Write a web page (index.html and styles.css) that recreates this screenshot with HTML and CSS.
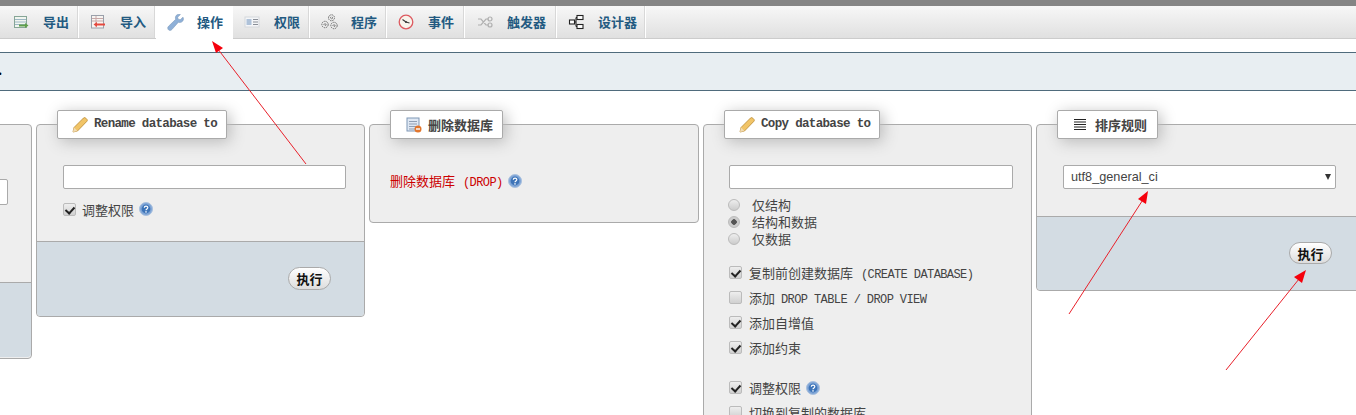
FILE: index.html
```html
<!DOCTYPE html>
<html lang="zh">
<head>
<meta charset="utf-8">
<title>phpMyAdmin</title>
<link rel="stylesheet" href="styles.css">
</head>
<body>
<div class="page">
  <div class="topbar"></div>
  <nav class="tabs">
    <a class="tab"><svg class="ico" viewBox="0 0 16 16"><rect x="1.500" y="2.500" width="12" height="11" fill="#f1f5ef" stroke="#86a596"/><path d="M2 5.500h11M2 8h11M2 10.500h11" stroke="#9db7c4" fill="none"/><path d="M6 10.500h6V9l3.500 2.500L12 14v-1.500H6z" fill="#5f9f4a"/></svg><span>导出</span></a>
    <a class="tab"><svg class="ico" viewBox="0 0 16 16"><rect x="1.500" y="1.500" width="12" height="12.500" fill="#f7f4f1" stroke="#9aa0aa"/><path d="M2 4.500h11M2 7h11M6 2v11.500" stroke="#c7a7a7" fill="none"/><path d="M15 9.500H7V8l-3.500 2.500L7 13v-1.500h8z" fill="#e5483e"/></svg><span>导入</span></a>
    <a class="tab active"><svg class="ico ico-w" viewBox="0 0 17 17"><path d="M16 3.200l-2.800 2.600-2-.6-.6-2L13.400.5c-2-.8-4.400.2-4.900 2.400-.2.900-.1 1.700.2 2.400L1.500 12.300c-1.300 1.300-.8 3 .2 3.700 1 .7 2.300.5 3.200-.5l6.500-7.300c1 .4 2.100.4 3.100-.1 1.700-.9 2.500-3 1.500-4.900z" fill="#8eb0d8" stroke="#7f9cbc" stroke-width=".6"/></svg><span>操作</span></a>
    <a class="tab"><svg class="ico" viewBox="0 0 16 16"><rect x="1" y="3" width="14" height="10" fill="#f5f6f8" stroke="#d4d7dc"/><rect x="2.500" y="5" width="5" height="6" fill="#afc2d9"/><path d="M9 5.500h5M9 8h5M9 10.500h5" stroke="#8a8f98"/></svg><span>权限</span></a>
    <a class="tab"><svg class="ico ico-w" viewBox="0 0 17 17" fill="none" stroke="#6b6b6b" stroke-width="1" stroke-dasharray="1.500 .8"><circle cx="10.500" cy="3.800" r="3"/><circle cx="4" cy="10.500" r="3.200"/><circle cx="13" cy="11.500" r="3.200"/><circle cx="10.500" cy="3.800" r="1"/><circle cx="4" cy="10.500" r="1"/><circle cx="13" cy="11.500" r="1"/></svg><span>程序</span></a>
    <a class="tab tab-e"><svg class="ico" viewBox="0 0 16 16"><circle cx="8" cy="8" r="6.800" fill="#f8f4ec" stroke="#dd5a60" stroke-width="1.300"/><path d="M8 8L4.500 5.500M8 8l3.500 1" stroke="#3a3a3a" stroke-width="1.100"/><circle cx="8" cy="8" r="1" fill="#3a3a3a"/></svg><span>事件</span></a>
    <a class="tab tab-w"><svg class="ico" viewBox="0 0 16 16" fill="none" stroke="#b0b0b0" stroke-width="1.200"><path d="M1 5h3l5 6h3M1 11h3l5-6h3"/><circle cx="13" cy="5" r="2"/><circle cx="13" cy="11" r="2"/></svg><span>触发器</span></a>
    <a class="tab tab-d"><svg class="ico" viewBox="0 0 16 16" fill="#fff" stroke="#222" stroke-width="1.100"><rect x="9" y="1.500" width="6" height="4"/><rect x="9" y="10.500" width="6" height="4"/><rect x="1.500" y="6" width="5" height="4"/><path d="M6.500 8H8M8 3.500V12.500M8 3.500h1M8 12.500h1" fill="none"/></svg><span>设计器</span></a>
  </nav>
  <div class="notice"><span class="notice-dot">.</span></div>
  <main class="panels">
    <section class="panel p-first">
      <div class="legend"><span>重命名</span></div>
      <div class="body body-first"><input class="text" type="text"></div>
      <div class="foot foot-first"></div>
    </section>
    <section class="panel">
      <div class="legend">
        <svg class="lg-ico" viewBox="0 0 16 16"><path d="M1 15l1-4.500L11.500 1c.8-.6 1.600-.5 2.300.2l1 1c.7.700.7 1.500 0 2.200L5.500 14z" fill="#f1c467" stroke="#b98a35" stroke-width=".8"/><path d="M1 15l1-4.500 3.500 3.500z" fill="#f2dcb4"/></svg>
        <span class="mono-b">Rename database to</span>
      </div>
      <div class="body body-rename">
        <input class="text" type="text">
        <label class="check check-rename"><input class="cb" type="checkbox" checked><span>调整权限</span><svg class="help" viewBox="0 0 14 14"><circle cx="7" cy="7" r="6.500" fill="#7fa5d6" stroke="#a9c0de"/><circle cx="7" cy="7" r="4.400" fill="#3d74b8"/><path d="M5.300 5.700c0-2.200 3.500-2.200 3.500-.1 0 1.300-1.800 1.300-1.800 2.600" fill="none" stroke="#fff" stroke-width="1.200"/><rect x="6.300" y="9.200" width="1.400" height="1.400" fill="#fff"/></svg></label>
      </div>
      <div class="foot foot-rename"><button class="go" type="button">执行</button></div>
    </section>
    <section class="panel p-drop">
      <div class="legend">
        <svg class="lg-ico" viewBox="0 0 16 16"><rect x="1" y="1" width="12" height="13" fill="#dfe8f4" stroke="#7f97b6"/><path d="M3 4.500h8M3 7h8M3 9.500h8M3 12h6" stroke="#8f9fb5"/><circle cx="12" cy="12" r="3.500" fill="#e2762d"/><rect x="10" y="11.300" width="4" height="1.400" fill="#fff"/></svg>
        <span class="cjk-b">删除数据库</span>
      </div>
      <div class="body body-drop"><span class="drop">删除数据库<span class="mono">(DROP)</span></span><svg class="help" viewBox="0 0 14 14"><circle cx="7" cy="7" r="6.500" fill="#7fa5d6" stroke="#a9c0de"/><circle cx="7" cy="7" r="4.400" fill="#3d74b8"/><path d="M5.300 5.700c0-2.200 3.500-2.200 3.500-.1 0 1.300-1.800 1.300-1.800 2.600" fill="none" stroke="#fff" stroke-width="1.200"/><rect x="6.300" y="9.200" width="1.400" height="1.400" fill="#fff"/></svg></div>
    </section>
    <section class="panel">
      <div class="legend">
        <svg class="lg-ico" viewBox="0 0 16 16"><path d="M1 15l1-4.500L11.500 1c.8-.6 1.600-.5 2.300.2l1 1c.7.700.7 1.500 0 2.200L5.500 14z" fill="#f1c467" stroke="#b98a35" stroke-width=".8"/><path d="M1 15l1-4.500 3.500 3.500z" fill="#f2dcb4"/></svg>
        <span class="mono-b">Copy database to</span>
      </div>
      <div class="body body-copy">
        <input class="text" type="text">
        <div class="radios">
          <label class="radio"><input class="rb" type="radio" name="what"><span>仅结构</span></label>
          <label class="radio"><input class="rb" type="radio" name="what" checked><span>结构和数据</span></label>
          <label class="radio"><input class="rb" type="radio" name="what"><span>仅数据</span></label>
        </div>
        <div class="checks">
          <label class="check"><input class="cb" type="checkbox" checked><span>复制前创建数据库<span class="mono">(CREATE DATABASE)</span></span></label>
          <label class="check"><input class="cb" type="checkbox"><span>添加<span class="mono mono-near">DROP TABLE / DROP VIEW</span></span></label>
          <label class="check"><input class="cb" type="checkbox" checked><span>添加自增值</span></label>
          <label class="check"><input class="cb" type="checkbox" checked><span>添加约束</span></label>
          <label class="check check-sep"><input class="cb" type="checkbox" checked><span>调整权限</span><svg class="help" viewBox="0 0 14 14"><circle cx="7" cy="7" r="6.500" fill="#7fa5d6" stroke="#a9c0de"/><circle cx="7" cy="7" r="4.400" fill="#3d74b8"/><path d="M5.300 5.700c0-2.200 3.500-2.200 3.500-.1 0 1.300-1.800 1.300-1.800 2.600" fill="none" stroke="#fff" stroke-width="1.200"/><rect x="6.300" y="9.200" width="1.400" height="1.400" fill="#fff"/></svg></label>
          <label class="check"><input class="cb" type="checkbox"><span>切换到复制的数据库</span></label>
        </div>
      </div>
    </section>
    <section class="panel">
      <div class="legend">
        <svg class="lg-ico lg-lines" viewBox="0 0 14 14"><path d="M1 1.500h12M1 4h12M1 6.500h12M1 9h12M1 11.500h12" stroke="#222" stroke-width="1"/></svg>
        <span class="cjk-b">排序规则</span>
      </div>
      <div class="body body-coll">
        <div class="select-wrap">
          <select class="select"><option>utf8_general_ci</option></select>
          <i class="caret"></i>
        </div>
      </div>
      <div class="foot foot-coll"><button class="go go-coll" type="button">执行</button></div>
    </section>
  </main>
  <svg class="arrows" viewBox="0 0 1356 415">
    <g stroke="#e8202a" stroke-width="1" fill="none">
      <path d="M306 164L214 44"/>
      <path d="M1069 314L1146 195"/>
      <path d="M1226 370L1303 274"/>
    </g>
    <g fill="#f5000c">
      <path d="M212 41l11 7-7 5z"/>
      <path d="M1148 191l-2 13-8-5z"/>
      <path d="M1306 270l-4 13-8-6z"/>
    </g>
  </svg>
</div>
</body>
</html>
```
FILE: styles.css
```css
* { box-sizing: border-box; }
html, body { margin: 0; padding: 0; background: #fff; }
body { width: 1356px; height: 415px; overflow: hidden; font-family: "Noto Sans CJK SC", "Liberation Sans", sans-serif; color: #444; }
.page { position: relative; width: 1356px; height: 415px; overflow: hidden; }
.topbar { height: 6px; background: #858585; }
.tabs { display: flex; height: 33px; padding-left: 2px; background: linear-gradient(#f7f7f7, #e0e0e0); border-bottom: 1px solid #ccc; }
.tab { display: flex; align-items: center; width: 77px; height: 32px; padding-left: 11px; border-right: 1px solid #fff; box-shadow: inset -1px 0 0 #d8d8d8; color: #235a81; font-size: 13px; font-weight: 700; line-height: 1; }
.tab-e { width: 78px; }
.tab-w { width: 92px; padding-left: 12px; }
.tab-d { width: 89px; }
.tab.active { height: 33px; background: #fff; box-shadow: none; }
.tab span { margin: -2px 0 0 14px; white-space: nowrap; }
.ico { width: 16px; height: 16px; flex: none; }
.ico-w { width: 17px; height: 17px; margin-right: -1px; }
.notice { height: 39px; margin-top: 13px; background: #e8eef2; border-top: 1px solid #4f6b7c; border-bottom: 1px solid #4f6b7c; font-size: 13px; line-height: 34px; color: #000; }
.notice-dot { display: block; margin-left: -2px; font-weight: 700; }
.panels { display: flex; align-items: flex-start; gap: 4px; margin: 33px 0 0 -298px; width: 2000px; }
.panel { flex: 0 0 330px; width: 330px; background: #eee; border: 1px solid #aaa; border-radius: 4px; font-size: 13px; }
.panel:nth-child(2), .panel:nth-child(4) { flex-basis: 329px; width: 329px; }
.p-first { height: 235px; }
.legend { display: flex; align-items: center; width: fit-content; height: 29px; margin: -15px 0 0 20px; padding: 0 9px 0 14px; background: #fff; border: 1px solid #aaa; border-radius: 2px; box-shadow: 3px 3px 15px #bbb; position: relative; }
.p-first .legend { visibility: hidden; }
.lg-ico { width: 16px; height: 16px; margin-right: 6px; flex: none; }
.lg-lines { width: 14px; height: 14px; margin-right: 8px; }
.p-drop .legend { padding-left: 15px; }
.panel:last-child .legend { padding: 0 10px 0 15px; }
.mono-b { font: 700 12.500px/1 "Liberation Mono", monospace; letter-spacing: -.67px; color: #444; white-space: nowrap; }
.cjk-b { font-weight: 700; font-size: 13px; line-height: 1; color: #444; white-space: nowrap; }
.mono { margin-left: 8px; font: 400 12px/1 "Liberation Mono", monospace; letter-spacing: -.6px; }
.mono-near { margin-left: 6px; }
.text { display: block; height: 24px; background: #fff; border: 1px solid #aaa; border-radius: 2px; padding: 0; }
.body { padding: 26px 19px 0 26px; }
.body-first { height: 143px; padding: 40px 0 0 270px; }
.body-first .text { width: 35px; height: 26px; }
.body-rename { height: 102px; }
.body-rename .text { width: 283px; }
.body-drop { display: flex; align-items: center; height: 83px; padding: 0 0 0 20px; }
.drop { color: #c00; font-size: 13px; }
.body-drop .help { margin-left: 5px; }
.body-copy { height: 305px; padding-left: 25px; }
.body-copy .text { width: 284px; }
.radios { margin: 7px 0 0 -1px; }
.radio { display: flex; align-items: center; height: 17px; font-size: 13px; }
.rb { appearance: none; width: 12px; height: 12px; margin: 0 12px 0 0; border: 1px solid #bbb; border-radius: 50%; background: linear-gradient(#eee, #ccc); }
.rb:checked { background: radial-gradient(circle, #555 0 2.500px, #ccc 3px); }
.checks { margin-top: 13px; }
.check { display: flex; align-items: center; height: 25px; font-size: 13px; white-space: nowrap; }
.check-rename { margin-top: 13px; height: 14px; }
.check-sep { margin-top: 15px; }
.cb { appearance: none; position: relative; flex: none; width: 13px; height: 13px; margin: 0 7px 0 0; border: 1px solid #bbb; border-radius: 2px; background: linear-gradient(#eee, #d0d0d0); }
.check-rename .cb { margin-right: 6px; }
.cb:checked::after { content: ""; position: absolute; left: 3px; top: 1px; width: 4px; height: 7px; border: solid #222; border-width: 0 2px 2px 0; transform: rotate(42deg); }
.help { width: 14px; height: 14px; margin-left: 5px; flex: none; }
.foot { background: #d3dce3; border-top: 1px solid #aaa; border-radius: 0 0 4px 4px; display: flex; justify-content: flex-end; }
.foot-first { height: 75px; }
.foot-rename { height: 75px; padding: 25px 33px 0 0; }
.foot-coll { height: 74px; padding: 25px 33px 0 0; width: 328px; }
.body-coll { height: 77px; }
.select-wrap { position: relative; width: 273px; }
.select { appearance: none; display: block; width: 273px; height: 24px; padding: 0 0 0 7px; background: #fff; border: 1px solid #aaa; border-radius: 2px; color: #444; font: 12.700px "Liberation Sans", sans-serif; }
.caret { position: absolute; right: 5px; top: 9px; width: 0; height: 0; border: 3.500px solid transparent; border-top: 6px solid #333; border-bottom: 0; }
.go { display: block; width: 43px; height: 23px; padding: 0; background: linear-gradient(#fff, #ddd); border: 1px solid #aaa; border-radius: 12px; color: #111; font: 700 13px/1 "Noto Sans CJK SC", sans-serif; }
.go-coll { height: 22px; }
.arrows { position: absolute; left: 0; top: 0; width: 1356px; height: 415px; pointer-events: none; }
```
